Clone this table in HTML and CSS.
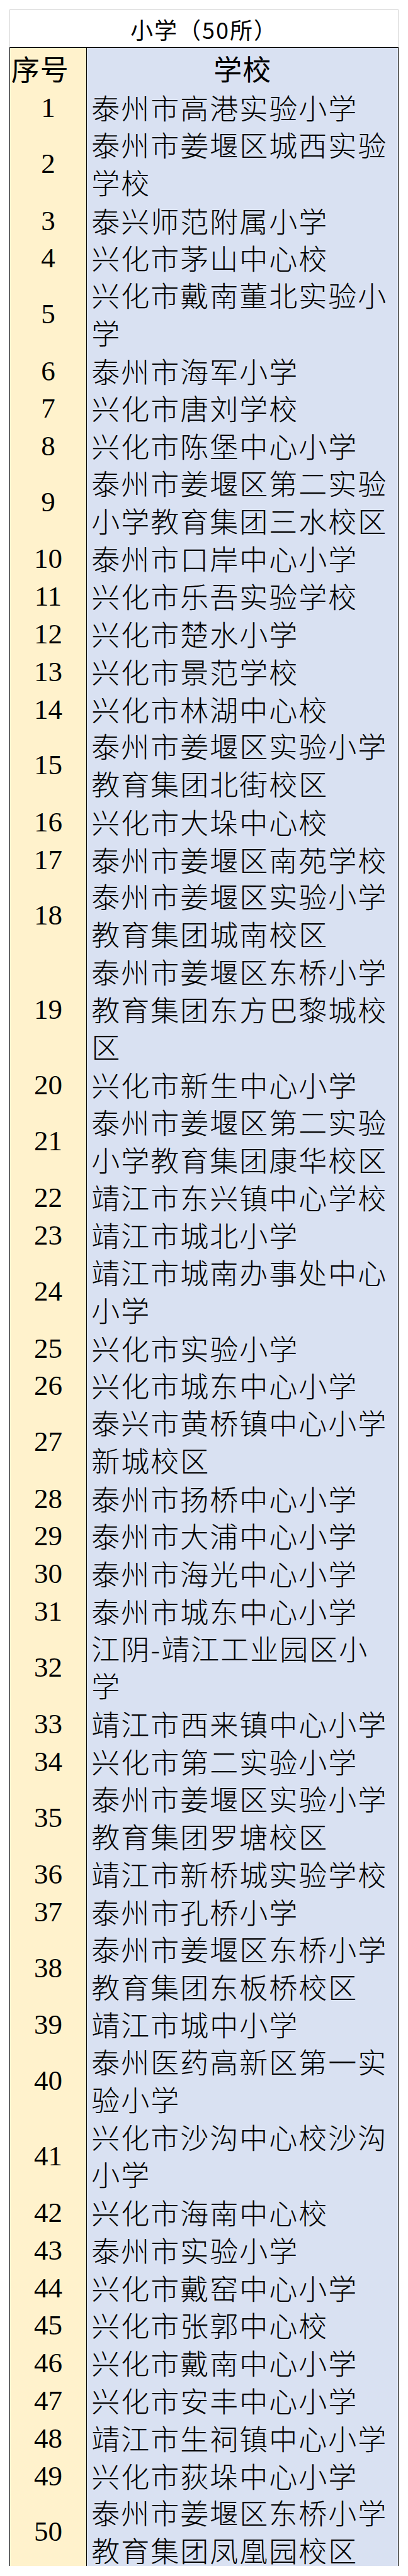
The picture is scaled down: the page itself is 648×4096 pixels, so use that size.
FILE: index.html
```html
<!DOCTYPE html>
<html lang="zh-CN">
<head>
<meta charset="utf-8">
<title>小学（50所）</title>
<link rel="stylesheet" href="styles.css">
</head>
<body>
<div class="sheet">
  <div class="title">小学（50所）</div>
  <div class="row head"><div class="no">序号</div><div class="name">学校</div></div>
  <div class="row"><div class="no">1</div><div class="name">泰州市高港实验小学</div></div>
  <div class="row l2"><div class="no">2</div><div class="name">泰州市姜堰区城西实验<br>学校</div></div>
  <div class="row"><div class="no">3</div><div class="name">泰兴师范附属小学</div></div>
  <div class="row"><div class="no">4</div><div class="name">兴化市茅山中心校</div></div>
  <div class="row l2"><div class="no">5</div><div class="name">兴化市戴南董北实验小<br>学</div></div>
  <div class="row"><div class="no">6</div><div class="name">泰州市海军小学</div></div>
  <div class="row"><div class="no">7</div><div class="name">兴化市唐刘学校</div></div>
  <div class="row"><div class="no">8</div><div class="name">兴化市陈堡中心小学</div></div>
  <div class="row l2"><div class="no">9</div><div class="name">泰州市姜堰区第二实验<br>小学教育集团三水校区</div></div>
  <div class="row"><div class="no">10</div><div class="name">泰州市口岸中心小学</div></div>
  <div class="row"><div class="no">11</div><div class="name">兴化市乐吾实验学校</div></div>
  <div class="row"><div class="no">12</div><div class="name">兴化市楚水小学</div></div>
  <div class="row"><div class="no">13</div><div class="name">兴化市景范学校</div></div>
  <div class="row"><div class="no">14</div><div class="name">兴化市林湖中心校</div></div>
  <div class="row l2"><div class="no">15</div><div class="name">泰州市姜堰区实验小学<br>教育集团北街校区</div></div>
  <div class="row"><div class="no">16</div><div class="name">兴化市大垛中心校</div></div>
  <div class="row"><div class="no">17</div><div class="name">泰州市姜堰区南苑学校</div></div>
  <div class="row l2"><div class="no">18</div><div class="name">泰州市姜堰区实验小学<br>教育集团城南校区</div></div>
  <div class="row l3"><div class="no">19</div><div class="name">泰州市姜堰区东桥小学<br>教育集团东方巴黎城校<br>区</div></div>
  <div class="row"><div class="no">20</div><div class="name">兴化市新生中心小学</div></div>
  <div class="row l2"><div class="no">21</div><div class="name">泰州市姜堰区第二实验<br>小学教育集团康华校区</div></div>
  <div class="row"><div class="no">22</div><div class="name">靖江市东兴镇中心学校</div></div>
  <div class="row"><div class="no">23</div><div class="name">靖江市城北小学</div></div>
  <div class="row l2"><div class="no">24</div><div class="name">靖江市城南办事处中心<br>小学</div></div>
  <div class="row"><div class="no">25</div><div class="name">兴化市实验小学</div></div>
  <div class="row"><div class="no">26</div><div class="name">兴化市城东中心小学</div></div>
  <div class="row l2"><div class="no">27</div><div class="name">泰兴市黄桥镇中心小学<br>新城校区</div></div>
  <div class="row"><div class="no">28</div><div class="name">泰州市扬桥中心小学</div></div>
  <div class="row"><div class="no">29</div><div class="name">泰州市大浦中心小学</div></div>
  <div class="row"><div class="no">30</div><div class="name">泰州市海光中心小学</div></div>
  <div class="row"><div class="no">31</div><div class="name">泰州市城东中心小学</div></div>
  <div class="row l2"><div class="no">32</div><div class="name">江阴-靖江工业园区小<br>学</div></div>
  <div class="row"><div class="no">33</div><div class="name">靖江市西来镇中心小学</div></div>
  <div class="row"><div class="no">34</div><div class="name">兴化市第二实验小学</div></div>
  <div class="row l2"><div class="no">35</div><div class="name">泰州市姜堰区实验小学<br>教育集团罗塘校区</div></div>
  <div class="row"><div class="no">36</div><div class="name">靖江市新桥城实验学校</div></div>
  <div class="row"><div class="no">37</div><div class="name">泰州市孔桥小学</div></div>
  <div class="row l2"><div class="no">38</div><div class="name">泰州市姜堰区东桥小学<br>教育集团东板桥校区</div></div>
  <div class="row"><div class="no">39</div><div class="name">靖江市城中小学</div></div>
  <div class="row l2"><div class="no">40</div><div class="name">泰州医药高新区第一实<br>验小学</div></div>
  <div class="row l2"><div class="no">41</div><div class="name">兴化市沙沟中心校沙沟<br>小学</div></div>
  <div class="row"><div class="no">42</div><div class="name">兴化市海南中心校</div></div>
  <div class="row"><div class="no">43</div><div class="name">泰州市实验小学</div></div>
  <div class="row"><div class="no">44</div><div class="name">兴化市戴窑中心小学</div></div>
  <div class="row"><div class="no">45</div><div class="name">兴化市张郭中心校</div></div>
  <div class="row"><div class="no">46</div><div class="name">兴化市戴南中心小学</div></div>
  <div class="row"><div class="no">47</div><div class="name">兴化市安丰中心小学</div></div>
  <div class="row"><div class="no">48</div><div class="name">靖江市生祠镇中心小学</div></div>
  <div class="row"><div class="no">49</div><div class="name">兴化市荻垛中心小学</div></div>
  <div class="row l2"><div class="no">50</div><div class="name">泰州市姜堰区东桥小学<br>教育集团凤凰园校区</div></div>
</div>
</body>
</html>
```

FILE: styles.css
```css
html, body {
  margin: 0;
  padding: 0;
  background: #ffffff;
}

.sheet {
  margin: 14.75px 0 0 14.75px;
  width: 618.6px;
  border-bottom: 1px solid #000;
  color: #000;
}

.title {
  box-sizing: border-box;
  height: 59.77px;
  border: 1px solid #d4d4d4;
  border-bottom: 0;
  display: flex;
  align-items: center;
  justify-content: center;
  font-family: "Noto Sans CJK SC", "Noto Sans", sans-serif;
  font-size: 36px;
  letter-spacing: 2px;
  padding-top: 2px;
  background: #fff;
}

.row {
  box-sizing: border-box;
  height: 59.77px;
  display: grid;
  grid-template-columns: 122.4px 1fr;
  border-top: 1px solid #000;
  border-left: 1px solid #000;
  border-right: 1px solid #000;
}

.row.l2 { height: 119.54px; }
.row.l3 { height: 179.3px; }

.no {
  background: #fff2cc;
  border-right: 1px solid #000;
  display: flex;
  align-items: center;
  justify-content: center;
  font-family: "Liberation Serif", "Times New Roman", serif;
  font-size: 45px;
  line-height: 59.77px;
  padding-top: 7px;
  box-sizing: border-box;
  overflow: visible;
}

.name {
  background: #d9e1f2;
  display: flex;
  align-items: center;
  padding-left: 7px;
  padding-top: 5px;
  box-sizing: border-box;
  font-family: "Noto Sans CJK SC", "Noto Sans", sans-serif;
  font-weight: 300;
  font-size: 45px;
  letter-spacing: 2px;
  line-height: 59.77px;
  white-space: nowrap;
  overflow: visible;
}

.head .no {
  justify-content: flex-start;
  padding-left: 2px;
  padding-top: 3px;
  font-family: "Noto Sans CJK SC", "Noto Sans", sans-serif;
  font-weight: 400;
  font-size: 45px;
  letter-spacing: 1px;
}

.head .name {
  justify-content: center;
  padding-left: 0;
  padding-top: 3px;
  font-weight: 400;
  font-size: 45px;
  letter-spacing: 1px;
}
```
